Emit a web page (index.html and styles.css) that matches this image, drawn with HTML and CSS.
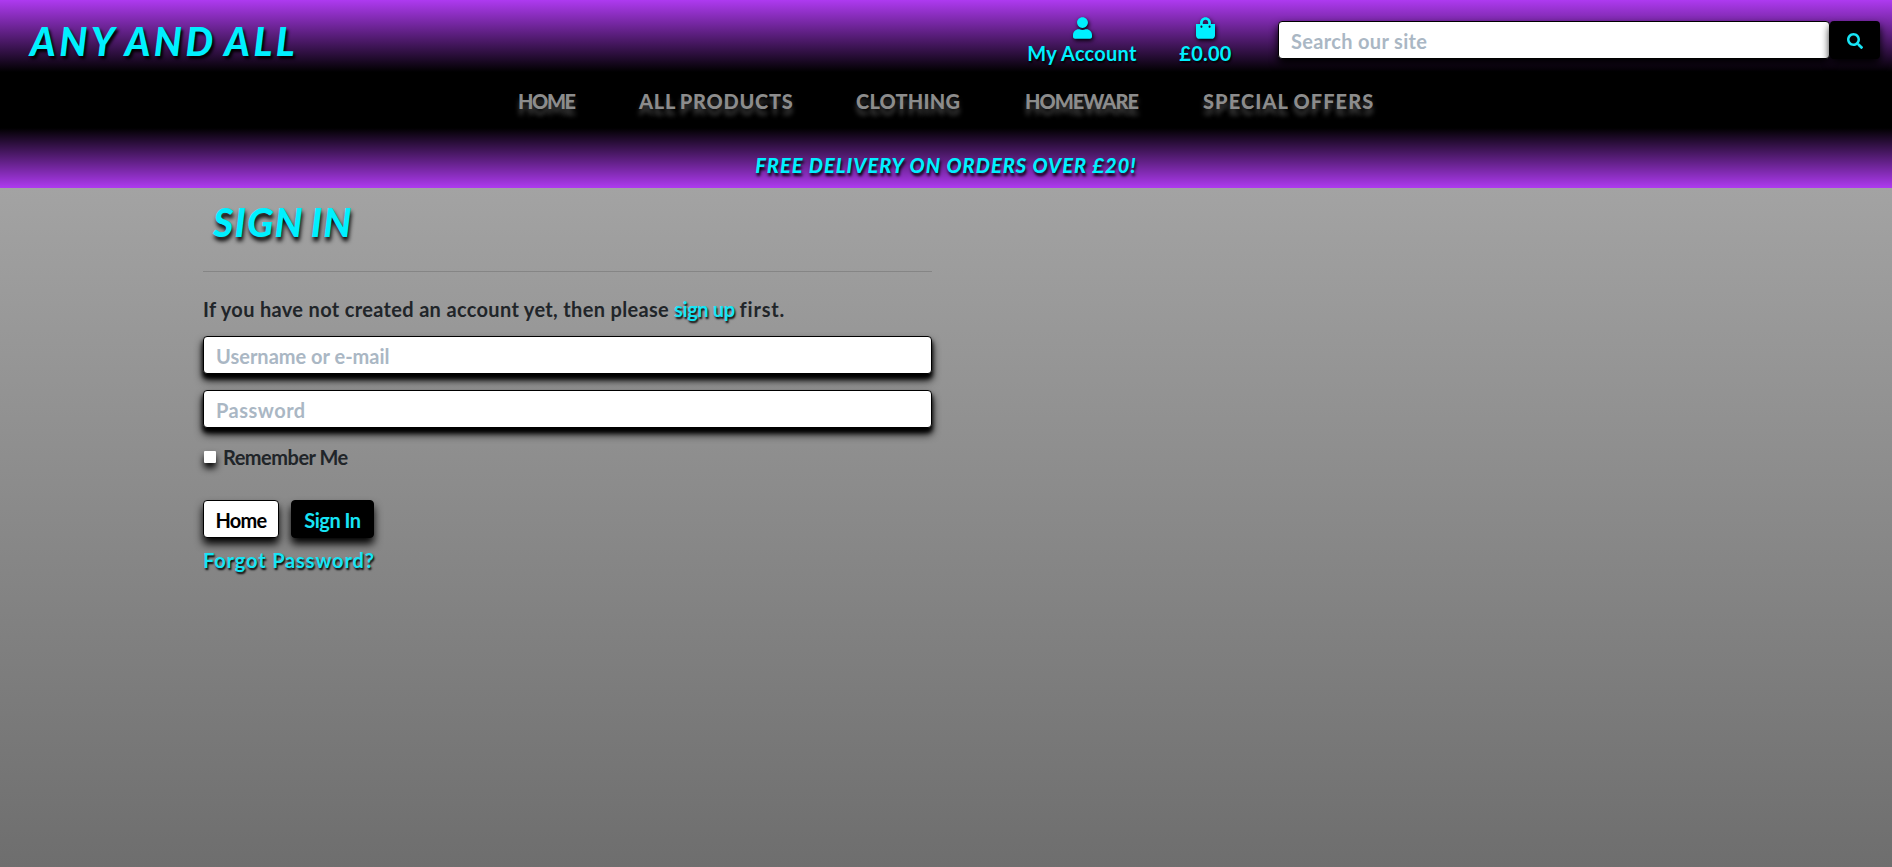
FILE: index.html
```html
<!DOCTYPE html>
<html lang="en">
<head>
<meta charset="utf-8">
<title>Any and All - Sign In</title>
<link rel="stylesheet" href="styles.css">
</head>
<body>
<header class="header">
  <div class="topbar">
    <a class="brand"><span class="t">ANY AND ALL</span></a>
    <div class="tools">
      <a class="tool account">
        <svg class="icon" viewBox="0 0 448 512"><path d="M224 256c70.700 0 128-57.300 128-128S294.700 0 224 0 96 57.300 96 128s57.300 128 128 128zm89.600 32h-16.700c-22.200 10.200-46.900 16-72.900 16s-50.600-5.800-72.900-16h-16.700C60.200 288 0 348.200 0 422.400V464c0 26.500 21.500 48 48 48h352c26.500 0 48-21.500 48-48v-41.600c0-74.200-60.200-134.400-134.400-134.400z"/></svg>
        <span class="t">My Account</span>
      </a>
      <a class="tool bag">
        <svg class="icon" viewBox="0 0 448 512"><path d="M352 160v-32C352 57.420 294.579 0 224 0 153.420 0 96 57.420 96 128v32H0v272c0 44.183 35.817 80 80 80h288c44.183 0 80-35.817 80-80V160h-96zm-192-32c0-35.290 28.710-64 64-64s64 28.710 64 64v32H160v-32zm160 120c-13.255 0-24-10.745-24-24s10.745-24 24-24 24 10.745 24 24-10.745 24-24 24zm-192 0c-13.255 0-24-10.745-24-24s10.745-24 24-24 24 10.745 24 24-10.745 24-24 24z"/></svg>
        <span class="t">£0.00</span>
      </a>
      <form class="search">
        <input class="field search-field" type="text" placeholder="Search our site">
        <button class="search-btn" type="button" aria-label="Search"><svg viewBox="0 0 512 512"><path d="M505 442.700L405.300 343c-4.500-4.500-10.600-7-17-7H372c27.600-35.300 44-79.700 44-128C416 93.100 322.900 0 208 0S0 93.100 0 208s93.100 208 208 208c48.300 0 92.700-16.400 128-44v16.300c0 6.400 2.500 12.500 7 17l99.700 99.700c9.400 9.400 24.600 9.400 33.900 0l28.300-28.300c9.400-9.400 9.400-24.600.1-34zM208 336c-70.700 0-128-57.200-128-128 0-70.700 57.200-128 128-128 70.700 0 128 57.200 128 128 0 70.700-57.200 128-128 128z"/></svg></button>
      </form>
    </div>
  </div>
  <nav class="nav">
    <a class="n1">HOME</a><a class="n2">ALL PRODUCTS</a><a class="n3">CLOTHING</a><a class="n4">HOMEWARE</a><a class="n5">SPECIAL OFFERS</a>
  </nav>
  <div class="banner"><span class="t">FREE DELIVERY ON ORDERS OVER £20!</span></div>
</header>
<main class="content">
  <h1 class="title">SIGN IN</h1>
  <hr class="rule">
  <p class="intro"><span class="i1">If you have not created an account yet, then please</span> <a class="link i2">sign up</a> <span class="i3">first.</span></p>
  <form class="login">
    <input class="field user" type="text" placeholder="Username or e-mail">
    <input class="field pass" type="password" placeholder="Password">
    <label class="remember"><input class="check" type="checkbox"><span>Remember Me</span></label>
    <div class="actions"><a class="btn home">Home</a><button class="btn signin" type="button">Sign In</button></div>
    <a class="link forgot">Forgot Password?</a>
  </form>
</main>
</body>
</html>
```
FILE: styles.css
```css
* { box-sizing: border-box; }
body {
  margin: 0;
  height: 867px;
  overflow: hidden;
  font: 700 20px/30px Lato, "Open Sans", sans-serif;
  color: #212529;
  background: linear-gradient(#a3a3a3 188px, #6e6e6e 867px);
}
a { text-decoration: none; white-space: nowrap; }
.header { height: 188px; color: #00f0ff; }
.topbar {
  height: 72px;
  display: flex;
  justify-content: space-between;
  background: linear-gradient(#ae3af0, #000);
}
.brand {
  padding: 16px 0 0 30px;
  font-size: 39px;
  font-weight: 900;
  line-height: 50px;
  font-style: italic;
  letter-spacing: 3.5px;
  word-spacing: -3px;
  text-shadow: 2px 3px 3px #000;
}
.tools { display: flex; padding-right: 12px; }
.tool {
  display: flex;
  flex-direction: column;
  align-items: center;
  padding-top: 17px;
  text-shadow: 1px 2px 2px #000;
}
.tool .t { line-height: 28px; letter-spacing: 0.25px; }
.icon { display: block; width: 19px; height: 22px; fill: #00f0ff; filter: drop-shadow(1px 2px 2px #000); }
.account { width: 108px; margin-right: 43px; }
.bag { width: 53px; margin-right: 46px; }
.search { display: flex; padding-top: 21px; }
.field {
  display: block;
  height: 38px;
  padding: 2px 12px 0;
  border: 1px solid #000;
  border-radius: 4px;
  background: #fff;
  font: inherit;
  box-shadow: 0 6px 9px #000, 0 4px 4px #000;
}
.field::placeholder { color: #aab7c4; opacity: 1; }
.search-field { width: 552px; box-shadow: 0 5px 8px #000; letter-spacing: 0.33px; }
.search-btn {
  width: 50px;
  height: 38px;
  padding: 0;
  border: 0;
  border-radius: 4px;
  background: #000;
  box-shadow: 0 5px 8px #000;
}
.search-btn svg { display: block; width: 16px; height: 16px; margin: 1px auto 0; fill: #17e4f5; }
.nav {
  height: 56px;
  display: flex;
  justify-content: center;
  gap: 64px;
  padding-top: 14px;
  background: #000;
  color: #8c8c8c;
  font-weight: 900;
  text-shadow: 0 6px 5px #444;
}
.n1 { width: 57px; letter-spacing: -1.4px; }
.n2 { width: 153px; letter-spacing: 0.7px; word-spacing: -1px; }
.n3 { width: 105px; letter-spacing: 0.2px; }
.n4 { width: 114px; letter-spacing: -1px; }
.n5 { width: 171px; letter-spacing: 1.1px; word-spacing: -1px; }
.banner {
  height: 60px;
  padding-top: 22px;
  text-align: center;
  font-style: italic;
  font-weight: 900;
  letter-spacing: 1.03px;
  background: linear-gradient(#000, #ae3af0);
  text-shadow: 1px 3px 3px #000;
}
.content { width: 729px; margin-left: 203px; }
.title {
  margin: 0;
  padding: 9px 0 0 10px;
  height: 83px;
  font-size: 39px;
  font-weight: 900;
  line-height: 50px;
  font-style: italic;
  letter-spacing: 1.2px;
  word-spacing: -2.5px;
  color: #00f0ff;
  text-shadow: 1px 4px 4px #000;
}
.rule { margin: 0; border: 0; height: 1px; background: #858585; }
.intro { margin: 22px 0 12px; white-space: nowrap; }
.i1 { letter-spacing: 0.33px; }
.i2 { letter-spacing: -0.35px; }
.i3 { letter-spacing: 0.8px; }
.link { color: #17e4f5; text-shadow: 1px 2px 2px #000; }
.login .field { width: 729px; margin-bottom: 16px; }
.pass { letter-spacing: 0.5px; }
.remember { display: flex; align-items: center; height: 26px; gap: 7px; letter-spacing: -0.5px; }
.check {
  appearance: none;
  width: 12px;
  height: 12px;
  margin: 0 0 0 1px;
  background: #fff;
  border-radius: 1px;
  box-shadow: 0 5px 7px #000;
}
.actions { display: flex; gap: 12px; margin-top: 30px; }
.btn {
  height: 38px;
  border: 1px solid #000;
  border-radius: 4px;
  font: inherit;
  padding: 1px 0 0;
  line-height: 37px;
  text-align: center;
  box-shadow: 0 6px 9px #000;
}
.home { width: 76px; background: #fff; color: #000; letter-spacing: -0.7px; }
.signin { width: 83px; background: #000; color: #17e4f5; letter-spacing: -0.5px; }
.forgot { display: block; padding-top: 7px; letter-spacing: 0.85px; }
```
